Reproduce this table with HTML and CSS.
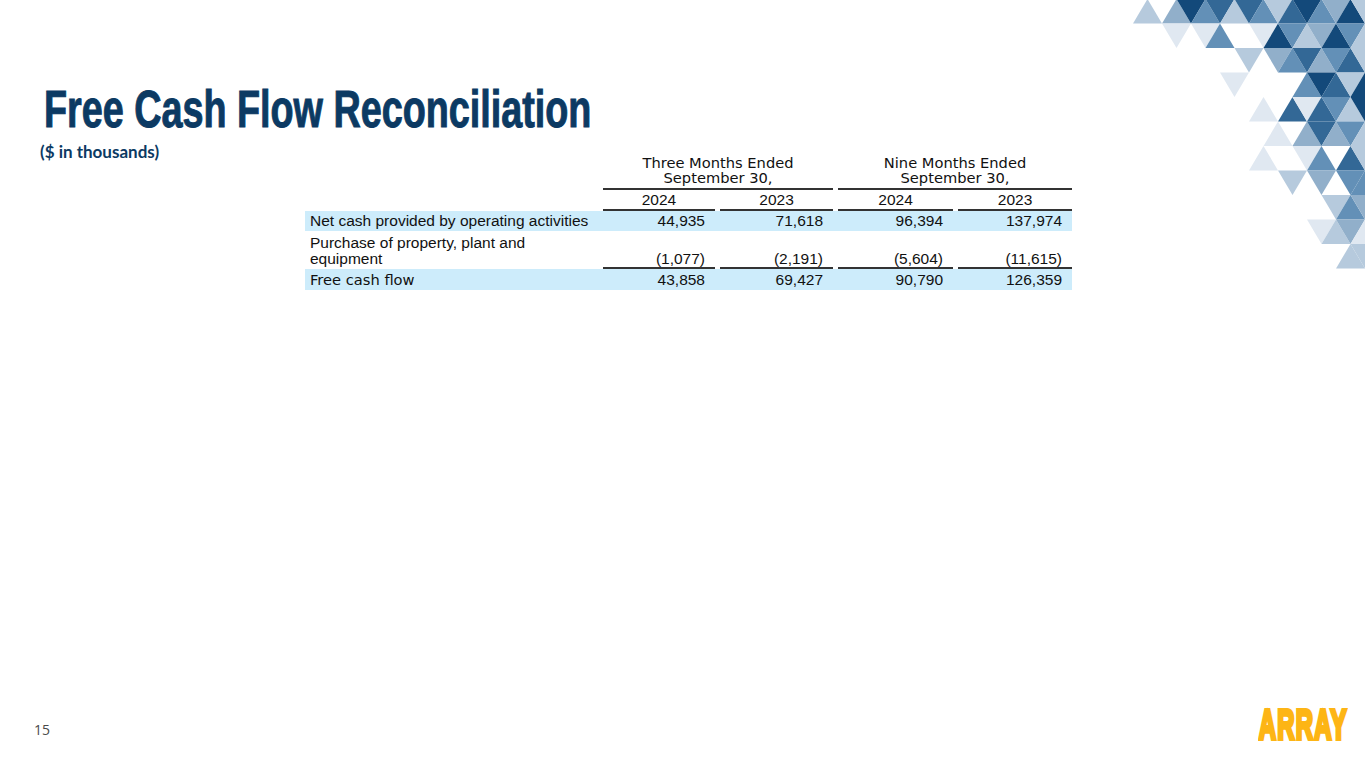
FILE: index.html
```html
<!DOCTYPE html>
<html lang="en">
<head>
<meta charset="utf-8">
<title>Free Cash Flow Reconciliation</title>
<link rel="stylesheet" href="styles.css">
</head>
<body>
<main class="slide">
  <svg class="pattern" viewBox="0 0 232 270" aria-hidden="true">
   <g transform="translate(0 -1) scale(1 1.0208333)">
    <!-- row 0 -->
    <polygon class="l2" points="0,24 14.5,0 29,24"/>
    <polygon class="l1" points="29,24 43.5,0 58,24"/>
    <polygon class="nv" points="43.5,0 72.5,0 58,24"/>
    <polygon class="md" points="58,24 72.5,0 87,24"/>
    <polygon class="dk" points="72.5,0 101.5,0 87,24"/>
    <polygon class="l2" points="87,24 101.5,0 116,24"/>
    <polygon class="dk" points="101.5,0 130.5,0 116,24"/>
    <polygon class="md" points="116,24 130.5,0 145,24"/>
    <polygon class="l2" points="130.5,0 159.5,0 145,24"/>
    <polygon class="dk" points="145,24 159.5,0 174,24"/>
    <polygon class="nv" points="159.5,0 188.5,0 174,24"/>
    <polygon class="md" points="174,24 188.5,0 203,24"/>
    <polygon class="l1" points="188.5,0 217.5,0 203,24"/>
    <polygon class="nv" points="203,24 217.5,0 232,24"/>
    <polygon class="l2" points="217.5,0 246.5,0 232,24"/>
    <!-- row 1 -->
    <polygon class="vl" points="29,24 58,24 43.5,48"/>
    <polygon class="vl" points="58,24 87,24 72.5,48"/>
    <polygon class="md" points="72.5,48 87,24 101.5,48"/>
    <polygon class="vl" points="116,24 145,24 130.5,48"/>
    <polygon class="nv" points="130.5,48 145,24 159.5,48"/>
    <polygon class="md" points="145,24 174,24 159.5,48"/>
    <polygon class="l2" points="159.5,48 174,24 188.5,48"/>
    <polygon class="l1" points="174,24 203,24 188.5,48"/>
    <polygon class="nv" points="188.5,48 203,24 217.5,48"/>
    <polygon class="md" points="203,24 232,24 217.5,48"/>
    <polygon class="l2" points="217.5,48 232,24 246.5,48"/>
    <!-- row 2 -->
    <polygon class="l2" points="101.5,48 130.5,48 116,72"/>
    <polygon class="l1" points="130.5,48 159.5,48 145,72"/>
    <polygon class="md" points="145,72 159.5,48 174,72"/>
    <polygon class="dk" points="159.5,48 188.5,48 174,72"/>
    <polygon class="l1" points="174,72 188.5,48 203,72"/>
    <polygon class="md" points="188.5,48 217.5,48 203,72"/>
    <polygon class="dk" points="203,72 217.5,48 232,72"/>
    <polygon class="l2" points="217.5,48 246.5,48 232,72"/>
    <!-- row 3 -->
    <polygon class="vl" points="87,72 116,72 101.5,96"/>
    <polygon class="md" points="159.5,96 174,72 188.5,96"/>
    <polygon class="nv" points="174,72 203,72 188.5,96"/>
    <polygon class="dk" points="188.5,96 203,72 217.5,96"/>
    <polygon class="l2" points="203,72 232,72 217.5,96"/>
    <polygon class="nv" points="217.5,96 232,72 246.5,96"/>
    <!-- row 4 -->
    <polygon class="vl" points="116,120 130.5,96 145,120"/>
    <polygon class="dk" points="145,120 159.5,96 174,120"/>
    <polygon class="vl" points="159.5,96 188.5,96 174,120"/>
    <polygon class="dk" points="174,120 188.5,96 203,120"/>
    <polygon class="md" points="188.5,96 217.5,96 203,120"/>
    <polygon class="l2" points="203,120 217.5,96 232,120"/>
    <polygon class="nv" points="217.5,96 246.5,96 232,120"/>
    <!-- row 5 -->
    <polygon class="vl" points="130.5,144 145,120 159.5,144"/>
    <polygon class="l1" points="159.5,144 174,120 188.5,144"/>
    <polygon class="dk" points="174,120 203,120 188.5,144"/>
    <polygon class="l1" points="188.5,144 203,120 217.5,144"/>
    <polygon class="md" points="203,120 232,120 217.5,144"/>
    <polygon class="l2" points="217.5,144 232,120 246.5,144"/>
    <!-- row 6 -->
    <polygon class="vl" points="116,168 130.5,144 145,168"/>
    <polygon class="vl" points="159.5,144 188.5,144 174,168"/>
    <polygon class="md" points="174,168 188.5,144 203,168"/>
    <polygon class="dk" points="203,168 217.5,144 232,168"/>
    <polygon class="l2" points="217.5,144 246.5,144 232,168"/>
    <!-- row 7 -->
    <polygon class="l2" points="145,168 174,168 159.5,192"/>
    <polygon class="l1" points="174,168 203,168 188.5,192"/>
    <polygon class="md" points="203,168 232,168 217.5,192"/>
    <polygon class="md" points="217.5,192 232,168 246.5,192"/>
    <!-- row 8 -->
    <polygon class="l2" points="188.5,192 217.5,192 203,216"/>
    <polygon class="md" points="203,216 217.5,192 232,216"/>
    <polygon class="l1" points="217.5,192 246.5,192 232,216"/>
    <!-- row 9 -->
    <polygon class="vl" points="174,216 203,216 188.5,240"/>
    <polygon class="l2" points="188.5,240 203,216 217.5,240"/>
    <polygon class="l1" points="203,216 232,216 217.5,240"/>
    <polygon class="vl" points="217.5,240 232,216 246.5,240"/>
    <!-- row 10 -->
    <polygon class="l2" points="203,264 217.5,240 232,264"/>
    <polygon class="l2" points="217.5,240 246.5,240 232,264"/>
   </g>
  </svg>

  <h1 class="title">Free Cash Flow Reconciliation</h1>

  <div class="content">
    <p class="units">($ in thousands)</p>
    <table class="fin">
      <colgroup>
        <col class="c-label"><col class="c1"><col class="c2"><col class="c3"><col class="c4">
      </colgroup>
      <thead>
        <tr>
          <td></td>
          <th colspan="2" class="grp-cell"><div class="grp">Three Months Ended<br>September 30,</div></th>
          <th colspan="2" class="grp-cell"><div class="grp">Nine Months Ended<br>September 30,</div></th>
        </tr>
        <tr>
          <td></td>
          <th class="val"><div class="yr">2024</div></th>
          <th class="val"><div class="yr">2023</div></th>
          <th class="val"><div class="yr">2024</div></th>
          <th class="val"><div class="yr">2023</div></th>
        </tr>
      </thead>
      <tbody>
        <tr class="hl r1">
          <td class="lbl">Net cash provided by operating activities</td>
          <td class="val"><div class="num">44,935</div></td>
          <td class="val"><div class="num">71,618</div></td>
          <td class="val"><div class="num">96,394</div></td>
          <td class="val"><div class="num">137,974</div></td>
        </tr>
        <tr class="r2">
          <td class="lbl two">Purchase of property, plant and<br>equipment</td>
          <td class="val bot"><div class="num ul">(1,077)</div></td>
          <td class="val bot"><div class="num ul">(2,191)</div></td>
          <td class="val bot"><div class="num ul">(5,604)</div></td>
          <td class="val bot"><div class="num ul">(11,615)</div></td>
        </tr>
        <tr class="hl r3">
          <td class="lbl alt">Free cash flow</td>
          <td class="val"><div class="num">43,858</div></td>
          <td class="val"><div class="num">69,427</div></td>
          <td class="val"><div class="num">90,790</div></td>
          <td class="val"><div class="num">126,359</div></td>
        </tr>
      </tbody>
    </table>
  </div>

  <footer class="foot">
    <span class="pg">15</span>
    <span class="logo">ARRAY</span>
  </footer>
</main>
</body>
</html>
```

FILE: styles.css
```css
html, body {
  margin: 0;
  padding: 0;
}

body {
  width: 1365px;
  height: 768px;
  overflow: hidden;
  background: #ffffff;
  font-family: "Liberation Sans", Arial, sans-serif;
  color: #000;
}

.slide {
  position: relative;
  width: 1365px;
  height: 768px;
  box-sizing: border-box;
  padding-top: 84px;
  display: flex;
  flex-direction: column;
}

/* decorative triangle mosaic */
.pattern {
  position: absolute;
  top: 0;
  right: 0;
  width: 232px;
  height: 270px;
}
.pattern .nv { fill: #13497a; }
.pattern .dk { fill: #336896; }
.pattern .md { fill: #6390b7; }
.pattern .l1 { fill: #91afca; }
.pattern .l2 { fill: #b6cadd; }
.pattern .vl { fill: #e0e8f1; }

.title {
  margin: 0 0 0 44px;
  font-family: "Liberation Sans", Arial, sans-serif;
  font-weight: bold;
  font-size: 51px;
  line-height: 51px;
  color: #0c3a63;
  -webkit-text-stroke: 1px #0c3a63;
  white-space: nowrap;
  transform: scaleX(0.74);
  transform-origin: left top;
}

.content {
  display: flex;
  align-items: flex-start;
  margin-top: 7px;
  padding-left: 40px;
}

.units {
  width: 265px;
  margin: 0;
  flex: none;
  font-family: Lato, "Open Sans", sans-serif;
  font-weight: bold;
  font-size: 17px;
  line-height: 20px;
  color: #0c3a63;
}

.fin {
  margin-top: 13px;
  border-collapse: collapse;
  table-layout: fixed;
  width: 767px;
  font-family: "Liberation Sans", Arial, sans-serif;
  font-size: 15.5px;
  color: #111;
}

.c-label { width: 293px; }
.c1 { width: 117px; }
.c2 { width: 118px; }
.c3 { width: 120px; }
.c4 { width: 119px; }

.fin td, .fin th {
  padding: 0;
  font-weight: normal;
}

.grp-cell {
  padding-left: 5px !important;
}

.grp {
  font-family: "DejaVu Sans", sans-serif;
  font-size: 14.67px;
  line-height: 15px;
  text-align: center;
  color: #111;
  padding-bottom: 3px;
  border-bottom: 2px solid #333;
}

.fin .val {
  padding-left: 5px;
}

.yr {
  text-align: center;
  line-height: 16px;
  padding: 2px 0 1px;
  border-bottom: 2px solid #333;
}

.hl td {
  background: #cdecfb;
}

.lbl {
  padding-left: 5px !important;
  white-space: nowrap;
}

.r1 td {
  line-height: 20px;
}

.r3 td {
  line-height: 21px;
}

.lbl.alt {
  font-family: "DejaVu Sans", sans-serif;
  font-size: 14.67px;
}

.lbl.two {
  line-height: 16px;
  padding-top: 4px !important;
  padding-bottom: 2px !important;
}

.val.bot {
  vertical-align: bottom;
}

.num {
  text-align: right;
  padding-right: 10px;
}

.num.ul {
  line-height: 16px;
  border-bottom: 2px solid #333;
}

.foot {
  margin-top: auto;
  display: flex;
  justify-content: space-between;
  align-items: flex-end;
  padding: 0 18px 20px 34px;
}

.pg {
  font-family: "Open Sans", sans-serif;
  font-size: 14px;
  line-height: 18px;
  color: #4a4a4a;
  margin-bottom: 9px;
}

.logo {
  font-family: "Liberation Sans", Arial, sans-serif;
  font-weight: bold;
  font-size: 42px;
  line-height: 46px;
  letter-spacing: 2px;
  color: #fdb515;
  -webkit-text-stroke: 4px #fdb515;
  transform: scaleX(0.57);
  transform-origin: right bottom;
}
```
